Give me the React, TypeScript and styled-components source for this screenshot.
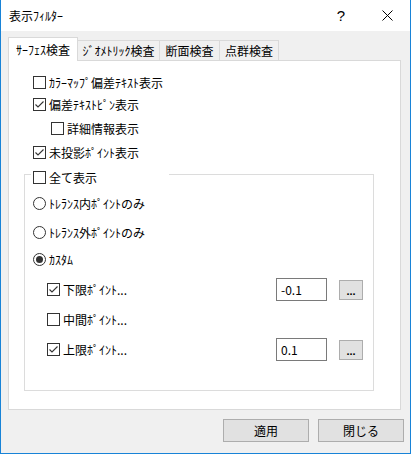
import React from 'react';
import styled, { createGlobalStyle } from 'styled-components';

const Global = createGlobalStyle`
  html, body {
    margin: 0;
    padding: 0;
    background: #fff;
  }
  body {
    font-family: "Noto Sans CJK JP", "Noto Sans", sans-serif;
    font-size: 12px;
    color: #000;
  }
`;

const Window = styled.div`
  width: 411px;
  height: 454px;
  box-sizing: border-box;
  border: 1px solid #1883d7;
  border-top: none;
  background: #f0f0f0;
  display: flex;
  flex-direction: column;
`;

const TitleBar = styled.div`
  height: 31px;
  flex: none;
  background: #fff;
  display: flex;
  align-items: center;
  padding-left: 8px;
`;

const Title = styled.span`
  flex: 1;
  font-size: 12px;
`;

const CaptionButton = styled.div`
  width: 46px;
  height: 31px;
  display: flex;
  align-items: center;
  justify-content: center;
  font-family: "Liberation Sans", sans-serif;
  font-size: 15px;
`;

const Body = styled.div`
  flex: 1;
  display: flex;
  flex-direction: column;
  padding: 7px 9px 0 7px;
`;

const TabStrip = styled.div`
  height: 23px;
  display: flex;
  align-items: flex-end;
  position: relative;
  z-index: 1;
  margin-bottom: -1px;
`;

const Tab = styled.div<{ active?: boolean; w: number }>`
  box-sizing: border-box;
  width: ${({ w }) => w}px;
  height: ${({ active }) => (active ? 24 : 21)}px;
  border: 1px solid #d9d9d9;
  border-bottom: ${({ active }) => (active ? 'none' : '1px solid #d9d9d9')};
  margin-left: ${({ active }) => (active ? 0 : -1)}px;
  background: ${({ active }) => (active ? '#fff' : '#f0f0f0')};
  display: flex;
  align-items: center;
  justify-content: center;
  padding-bottom: ${({ active }) => (active ? 1 : 0)}px;
  white-space: nowrap;
`;

const Panel = styled.div`
  box-sizing: border-box;
  width: 393px;
  height: 350px;
  background: #fff;
  border: 1px solid #d9d9d9;
  padding: 15px 0 0 15px;
  display: flex;
  flex-direction: column;
`;

const Row = styled.div<{ top: number; indent?: number }>`
  height: 13px;
  margin-top: ${({ top }) => top}px;
  margin-left: ${({ indent }) => indent ?? 0}px;
  display: flex;
  align-items: center;
  white-space: nowrap;
`;

const Box = styled.span`
  box-sizing: border-box;
  width: 13px;
  height: 13px;
  flex: none;
  border: 1px solid #333;
  background: #fff;
  display: flex;
  align-items: center;
  justify-content: center;
  margin-right: 3px;
`;

const Radio = styled.span<{ on?: boolean }>`
  box-sizing: border-box;
  width: 13px;
  height: 13px;
  flex: none;
  border: 1px solid #333;
  border-radius: 50%;
  background: #fff;
  display: flex;
  align-items: center;
  justify-content: center;
  margin-right: 3px;
  &::after {
    content: '';
    width: 7px;
    height: 7px;
    border-radius: 50%;
    background: ${({ on }) => (on ? '#333' : 'transparent')};
  }
`;

const Group = styled.div`
  box-sizing: border-box;
  width: 350px;
  height: 217px;
  margin-top: 15px;
  border: 1px solid #dcdcdc;
  display: flex;
  flex-direction: column;
  padding: 0 10px 0 8px;
`;

const Legend = styled.div`
  width: 136px;
  height: 13px;
  margin: -4px 0 0 -2px;
  padding-left: 2px;
  background: #fff;
  display: flex;
  align-items: center;
`;

const Spacer = styled.div`
  flex: 1;
`;

const Field = styled.div`
  box-sizing: border-box;
  width: 51px;
  height: 23px;
  flex: none;
  border: 1px solid #7a7a7a;
  background: #fff;
  padding-left: 4px;
  display: flex;
  align-items: center;
`;

const SmallButton = styled.div`
  box-sizing: border-box;
  width: 24px;
  height: 20px;
  flex: none;
  margin-left: 12px;
  background: #e1e1e1;
  border: 1px solid #adadad;
  display: flex;
  align-items: center;
  justify-content: center;
  font-family: "Liberation Sans", sans-serif;
  font-weight: bold;
  font-size: 11px;
  padding-top: 2px;
`;

const Footer = styled.div`
  display: flex;
  justify-content: flex-end;
  gap: 9px;
  margin-top: 9px;
  padding-right: 0;
  margin-right: -3px;
`;

const Button = styled.div`
  box-sizing: border-box;
  width: 86px;
  height: 23px;
  background: #e1e1e1;
  border: 1px solid #adadad;
  display: flex;
  align-items: center;
  justify-content: center;
`;

const Check = ({ checked }: { checked?: boolean }) => (
  <Box>
    {checked && (
      <svg width="11" height="11" viewBox="0 0 11 11">
        <polyline points="1.5,5.5 4,8 9.5,2.5" fill="none" stroke="#333" strokeWidth="1.1" />
      </svg>
    )}
  </Box>
);

const tabs = [
  { label: 'ｻｰﾌｪｽ検査', w: 70 },
  { label: 'ｼﾞｵﾒﾄﾘｯｸ検査', w: 83 },
  { label: '断面検査', w: 61 },
  { label: '点群検査', w: 60 },
];

export default function App() {
  return (
    <>
      <Global />
      <Window>
        <TitleBar>
          <Title>表示ﾌｨﾙﾀｰ</Title>
          <CaptionButton>?</CaptionButton>
          <CaptionButton>
            <svg width="11" height="11" viewBox="0 0 11 11">
              <path d="M0.5 0.5 L10.5 10.5 M10.5 0.5 L0.5 10.5" stroke="#000" strokeWidth="1" />
            </svg>
          </CaptionButton>
        </TitleBar>
        <Body>
          <TabStrip>
            {tabs.map((t, i) => (
              <Tab key={t.label} active={i === 0} w={t.w}>
                {t.label}
              </Tab>
            ))}
          </TabStrip>
          <Panel>
            <Row top={0} indent={9}>
              <Check />
              ｶﾗｰﾏｯﾌﾟ偏差ﾃｷｽﾄ表示
            </Row>
            <Row top={9} indent={9}>
              <Check checked />
              偏差ﾃｷｽﾄﾋﾟﾝ表示
            </Row>
            <Row top={11} indent={27}>
              <Check />
              詳細情報表示
            </Row>
            <Row top={11} indent={9}>
              <Check checked />
              未投影ﾎﾟｲﾝﾄ表示
            </Row>
            <Group>
              <Legend>
                <Check />
                全て表示
              </Legend>
              <Row top={13}>
                <Radio />
                ﾄﾚﾗﾝｽ内ﾎﾟｲﾝﾄのみ
              </Row>
              <Row top={16}>
                <Radio />
                ﾄﾚﾗﾝｽ外ﾎﾟｲﾝﾄのみ
              </Row>
              <Row top={14}>
                <Radio on />
                ｶｽﾀﾑ
              </Row>
              <Row top={17} indent={14}>
                <Check checked />
                下限ﾎﾟｲﾝﾄ...
                <Spacer />
                <Field>-0.1</Field>
                <SmallButton>...</SmallButton>
              </Row>
              <Row top={17} indent={14}>
                <Check />
                中間ﾎﾟｲﾝﾄ...
              </Row>
              <Row top={17} indent={14}>
                <Check checked />
                上限ﾎﾟｲﾝﾄ...
                <Spacer />
                <Field>0.1</Field>
                <SmallButton>...</SmallButton>
              </Row>
            </Group>
          </Panel>
          <Footer>
            <Button>適用</Button>
            <Button>閉じる</Button>
          </Footer>
        </Body>
      </Window>
    </>
  );
}
